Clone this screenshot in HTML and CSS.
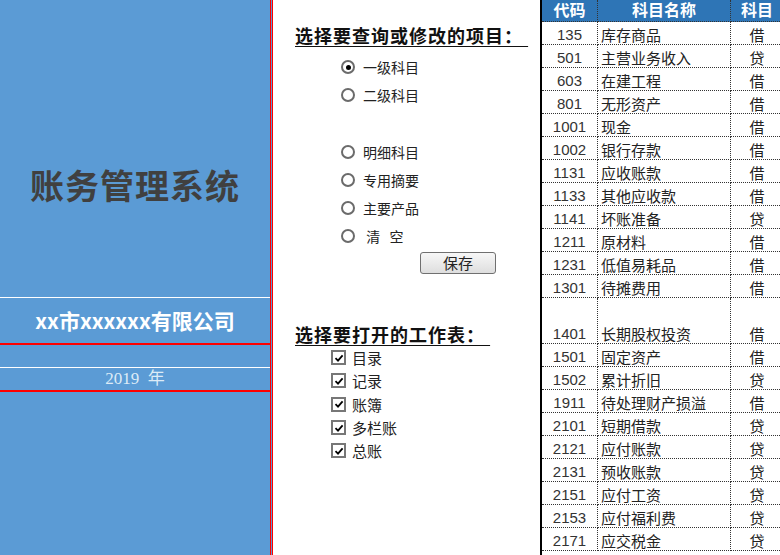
FILE: index.html
```html
<!DOCTYPE html>
<html lang="zh-CN">
<head>
    <meta charset="UTF-8">
    <meta name="viewport" content="width=device-width, initial-scale=1.0">
    <title>账务管理系统</title>
    <link rel="stylesheet" href="styles.css">
</head>
<body>
    <div class="page">
        <div class="cover">
            <div class="brand"><h1>账务管理系统</h1></div>
            <div class="company">xx市xxxxxx有限公司</div>
            <div class="spacer"></div>
            <div class="year">2019&nbsp;&nbsp;年</div>
        </div>

        <div class="menu">
            <h2 class="menu-title">选择要查询或修改的项目：&nbsp;</h2>
            <div class="radio-list">
                <div class="radio-item"><span class="radio checked"></span><span>一级科目</span></div>
                <div class="radio-item"><span class="radio"></span><span>二级科目</span></div>
                <div class="radio-gap"></div>
                <div class="radio-item"><span class="radio"></span><span>明细科目</span></div>
                <div class="radio-item"><span class="radio"></span><span>专用摘要</span></div>
                <div class="radio-item"><span class="radio"></span><span>主要产品</span></div>
                <div class="radio-item"><span class="radio"></span><span>&nbsp;清&nbsp;&nbsp;&nbsp;空</span></div>
            </div>
            <button type="button" class="save">保存</button>

            <h2 class="menu-title sheets-title">选择要打开的工作表：&nbsp;</h2>
            <div class="check-list">
                <div class="check-item"><span class="check"><svg viewBox="0 0 10 10" width="10" height="10"><path d="M1.5 5.2 L4 7.6 L8.6 2.4" fill="none" stroke="#000" stroke-width="1.8"/></svg></span><span>目录</span></div>
                <div class="check-item"><span class="check"><svg viewBox="0 0 10 10" width="10" height="10"><path d="M1.5 5.2 L4 7.6 L8.6 2.4" fill="none" stroke="#000" stroke-width="1.8"/></svg></span><span>记录</span></div>
                <div class="check-item"><span class="check"><svg viewBox="0 0 10 10" width="10" height="10"><path d="M1.5 5.2 L4 7.6 L8.6 2.4" fill="none" stroke="#000" stroke-width="1.8"/></svg></span><span>账簿</span></div>
                <div class="check-item"><span class="check"><svg viewBox="0 0 10 10" width="10" height="10"><path d="M1.5 5.2 L4 7.6 L8.6 2.4" fill="none" stroke="#000" stroke-width="1.8"/></svg></span><span>多栏账</span></div>
                <div class="check-item"><span class="check"><svg viewBox="0 0 10 10" width="10" height="10"><path d="M1.5 5.2 L4 7.6 L8.6 2.4" fill="none" stroke="#000" stroke-width="1.8"/></svg></span><span>总账</span></div>
            </div>
        </div>

        <div class="accounts">
            <table>
                <thead>
                    <tr>
                        <th class="code"><div class="head">代码</div></th>
                        <th class="name"><div class="head">科目名称</div></th>
                        <th class="side"><div class="head wrap">科目<br>方向</div></th>
                    </tr>
                </thead>
                <tbody id="rows"></tbody>
            </table>
        </div>
    </div>

    <script>
        const kemu = [
            ['135', '库存商品', '借'],
            ['501', '主营业务收入', '贷'],
            ['603', '在建工程', '借'],
            ['801', '无形资产', '借'],
            ['1001', '现金', '借'],
            ['1002', '银行存款', '借'],
            ['1131', '应收账款', '借'],
            ['1133', '其他应收款', '借'],
            ['1141', '坏账准备', '贷'],
            ['1211', '原材料', '借'],
            ['1231', '低值易耗品', '借'],
            ['1301', '待摊费用', '借'],
            ['1401', '长期股权投资', '借', true],
            ['1501', '固定资产', '借'],
            ['1502', '累计折旧', '贷'],
            ['1911', '待处理财产损溢', '借'],
            ['2101', '短期借款', '贷'],
            ['2121', '应付账款', '贷'],
            ['2131', '预收账款', '贷'],
            ['2151', '应付工资', '贷'],
            ['2153', '应付福利费', '贷'],
            ['2171', '应交税金', '贷']
        ];

        let html = '';
        for (let k of kemu) {
            html += `<tr${k[3] ? ' class="tall"' : ''}>
                <td class="code">${k[0]}</td>
                <td class="name">${k[1]}</td>
                <td class="side">${k[2]}</td>
            </tr>`;
        }
        document.getElementById('rows').innerHTML = html;
    </script>
</body>
</html>
```

FILE: styles.css
```css
body {
    margin: 0;
    width: 780px;
    height: 555px;
    overflow: hidden;
    font-family: 'Noto Sans CJK SC', sans-serif;
    color: #222;
    background: #fff;
}
.page {
    display: flex;
    height: 555px;
    overflow: hidden;
}

/* left cover */
.cover {
    width: 270px;
    flex: none;
    background-color: #5B9BD5;
    border-right: 3px double #FF0000;
}
.brand {
    height: 298px;
    box-sizing: border-box;
    padding-top: 163px;
    border-bottom: 1px solid #fff;
}
.brand h1 {
    margin: 0;
    text-align: center;
    font-size: 34px;
    line-height: 44px;
    font-weight: bold;
    color: #404040;
    letter-spacing: 1px;
}
.company {
    height: 45px;
    line-height: 45px;
    text-align: center;
    color: #fff;
    font-size: 21px;
    font-weight: bold;
    border-bottom: 2px solid #FF0000;
}
.spacer {
    height: 22px;
    border-bottom: 1px solid #fff;
}
.year {
    height: 22px;
    line-height: 22px;
    text-align: center;
    color: #DDEBF7;
    font-size: 17px;
    font-family: 'Liberation Serif', 'Noto Sans CJK SC', serif;
    border-bottom: 2px solid #FF0000;
}

/* middle menu */
.menu {
    width: 267px;
    flex: none;
    box-sizing: border-box;
    padding-left: 22px;
}
.menu-title {
    margin: 24px 0 0;
    font-size: 18px;
    line-height: 22px;
    font-weight: bold;
    color: #111;
    text-decoration: underline;
    text-underline-offset: 3px;
    letter-spacing: 1px;
    white-space: nowrap;
}
.radio-list {
    margin-top: 7px;
    margin-left: 46px;
}
.radio-item {
    display: flex;
    align-items: center;
    height: 28px;
    font-size: 14px;
}
.radio-gap {
    height: 29px;
}
.radio {
    width: 14px;
    height: 14px;
    box-sizing: border-box;
    border: 2px solid #6b6b6b;
    border-radius: 50%;
    margin-right: 8px;
    display: flex;
    align-items: center;
    justify-content: center;
    background: #fff;
}
.radio.checked::after {
    content: '';
    width: 5px;
    height: 5px;
    border-radius: 50%;
    background: #000;
}
.save {
    display: block;
    margin: 2px 0 0 125px;
    width: 76px;
    height: 22px;
    padding: 0;
    font-family: 'Noto Sans CJK SC', sans-serif;
    font-size: 15px;
    line-height: 20px;
    color: #222;
    border: 1px solid #707070;
    border-radius: 3px;
    background: linear-gradient(#f7f7f7, #dedede);
}
.sheets-title {
    margin-top: 49px;
}
.check-list {
    margin-top: 1px;
    margin-left: 36px;
}
.check-item {
    display: flex;
    align-items: center;
    height: 23.3px;
    font-size: 15px;
}
.check {
    width: 15px;
    height: 15px;
    box-sizing: border-box;
    border: 2px solid #777;
    background: #fff;
    margin-right: 6px;
    display: flex;
    align-items: center;
    justify-content: center;
}

/* right accounts table */
.accounts {
    flex: none;
    border-left: 2px solid #000;
    width: 240px;
}
table {
    border-collapse: collapse;
    table-layout: fixed;
    width: 242px;
}
th, td {
    padding: 0;
    border: 1px dotted #333;
    white-space: nowrap;
}
th {
    background-color: #2E75B6;
    color: #fff;
    font-size: 16px;
    font-weight: bold;
    height: 21px;
    vertical-align: top;
    border-top: none;
}
.head {
    height: 21px;
    line-height: 19px;
    overflow: hidden;
}
.head.wrap {
    white-space: normal;
}
td {
    height: 22px;
    line-height: 18px;
    font-size: 15px;
    color: #222;
    vertical-align: bottom;
}
tr.tall td {
    height: 45px;
}
th:first-child, td:first-child {
    border-left: none;
}
.code {
    width: 55px;
    text-align: center;
}
td.code {
    font-family: 'Liberation Sans', sans-serif;
    color: #333;
}
.name {
    width: 132px;
    text-align: left;
    padding-left: 3px;
}
th.name {
    text-align: center;
    padding-left: 0;
}
.side {
    width: 52px;
    text-align: center;
}
```
